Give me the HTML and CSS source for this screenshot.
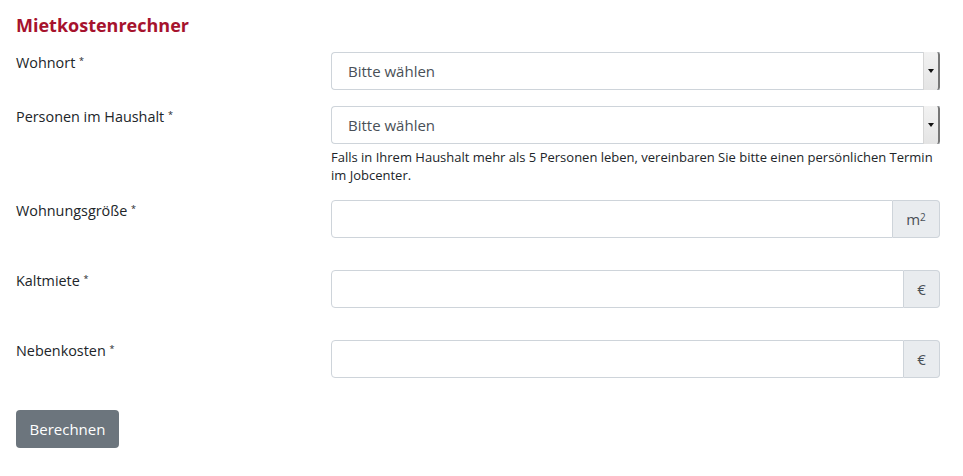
FILE: index.html
```html
<!DOCTYPE html>
<html lang="de">
  <head>
    <meta charset="UTF-8" />
    <meta name="viewport" content="width=device-width, initial-scale=1.0" />
    <title>Mietkostenrechner</title>
    <link rel="stylesheet" href="styles.css">
  </head>
  <body>
    <div class="calc">
      <h2 class="calc-title">Mietkostenrechner</h2>
      <form id="rent-form">
        <div class="form-row">
          <label for="wohnort">Wohnort <span class="req">*</span></label>
          <div class="field">
            <div class="select-box">
              <span class="select-value">Bitte wählen</span>
              <span class="select-arrow"></span>
            </div>
          </div>
        </div>
        <div class="form-row">
          <label for="personen">Personen im Haushalt <span class="req">*</span></label>
          <div class="field">
            <div class="select-box">
              <span class="select-value">Bitte wählen</span>
              <span class="select-arrow"></span>
            </div>
            <p class="help">Falls in Ihrem Haushalt mehr als 5 Personen leben, vereinbaren Sie bitte einen persönlichen Termin im Jobcenter.</p>
          </div>
        </div>
        <div class="form-row input-row">
          <label for="groesse">Wohnungsgröße <span class="req">*</span></label>
          <div class="field">
            <div class="input-group">
              <input type="text" id="groesse" />
              <span class="addon addon-wide">m<sup>2</sup></span>
            </div>
          </div>
        </div>
        <div class="form-row input-row">
          <label for="kaltmiete">Kaltmiete <span class="req">*</span></label>
          <div class="field">
            <div class="input-group">
              <input type="text" id="kaltmiete" />
              <span class="addon">€</span>
            </div>
          </div>
        </div>
        <div class="form-row input-row">
          <label for="nebenkosten">Nebenkosten <span class="req">*</span></label>
          <div class="field">
            <div class="input-group">
              <input type="text" id="nebenkosten" />
              <span class="addon">€</span>
            </div>
          </div>
        </div>
        <button type="button" class="btn">Berechnen</button>
      </form>
    </div>
  </body>
</html>
```

FILE: styles.css
```css
body {
  margin: 0;
  font-family: "Open Sans", sans-serif;
  color: #212529;
  background: #fff;
}
.calc {
  padding: 13px 23px 0 16px;
}
.calc-title {
  margin: 0 0 15px;
  font-size: 18px;
  line-height: 24px;
  font-weight: 700;
  color: #a6122d;
}
.form-row {
  display: grid;
  grid-template-columns: 315px 1fr;
  margin-bottom: 16px;
}
.input-row {
  padding-bottom: 16px;
}
label {
  font-size: 14.4px;
  line-height: 21px;
}
.req {
  font-size: 9px;
  vertical-align: top;
  position: relative;
  top: -2px;
}
.select-box {
  display: flex;
  height: 38px;
  box-sizing: border-box;
  border: 1px solid #ced4da;
  border-right: none;
  border-radius: 4px 0 0 4px;
}
.select-value {
  flex: 1;
  padding-left: 16px;
  font-size: 15px;
  line-height: 36px;
  color: #495057;
}
.select-arrow {
  width: 14px;
  margin: -1px 0;
  background: linear-gradient(#f2f2f2, #e4e4e4);
  border-left: 1px solid #d6d6d6;
  border-right: 2px solid #777;
  border-radius: 0 3px 3px 0;
  position: relative;
}
.select-arrow::after {
  content: "";
  position: absolute;
  left: 4px;
  top: 17px;
  border-left: 3px solid transparent;
  border-right: 3px solid transparent;
  border-top: 4px solid #111;
}
.help {
  margin: 4px 0 0;
  font-size: 13px;
  line-height: 18px;
  color: #212529;
}
.input-group {
  display: flex;
  height: 38px;
}
.input-group input {
  flex: 1;
  min-width: 0;
  box-sizing: border-box;
  border: 1px solid #ced4da;
  border-radius: 4px 0 0 4px;
  font-family: inherit;
  font-size: 15px;
  padding: 0 12px;
}
.addon {
  width: 36px;
  box-sizing: border-box;
  display: flex;
  align-items: center;
  justify-content: center;
  background: #e9ecef;
  border: 1px solid #ced4da;
  border-left: none;
  border-radius: 0 4px 4px 0;
  font-size: 15px;
  color: #495057;
}
.addon-wide {
  width: 47px;
}
.addon sup {
  font-size: 10px;
  position: relative;
  top: -2px;
}
.btn {
  height: 38px;
  width: 103px;
  padding: 0;
  background-color: #6c757d;
  color: #fff;
  border: none;
  border-radius: 4px;
  font-family: inherit;
  font-size: 15px;
  cursor: pointer;
}
```
